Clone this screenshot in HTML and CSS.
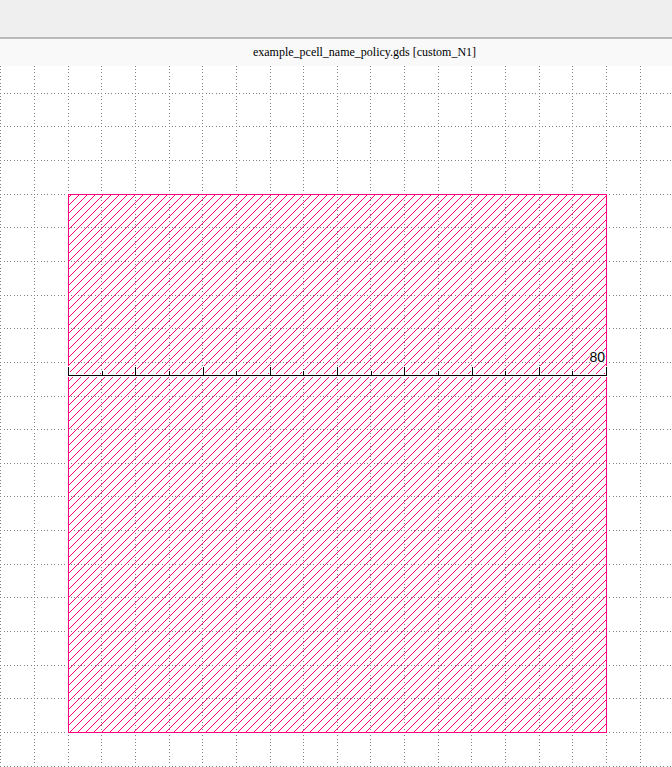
FILE: index.html
```html
<!DOCTYPE html>
<html lang="en">
<head>
<meta charset="utf-8">
<title>example_pcell_name_policy.gds [custom_N1]</title>
<link rel="stylesheet" href="styles.css">
</head>
<body>
<div class="toolbar"></div>
<header class="title">example_pcell_name_policy.gds [custom_N1]</header>
<main class="view">
<svg class="layout" id="layout" role="img" aria-label="Layout view">
  <path id="grid" class="grid"/>
  <path id="hatch" class="hatch"/>
  <path id="outline" class="outline"/>
  <path id="halo" class="halo"/>
  <path id="ruler" class="ruler"/>
  <text class="measure" x="605" y="296" text-anchor="end">80</text>
</svg>
</main>
<script src="layout.js"></script>
</body>
</html>
```
FILE: styles.css
```css
body {
  margin: 0;
  min-height: 100vh;
  display: flex;
  flex-direction: column;
  background: #fff;
}
.toolbar {
  box-sizing: border-box;
  height: 39px;
  background: #efefef;
  border-bottom: 2px solid #b9b9b9;
}
.title {
  height: 27px;
  padding-left: 57px;
  background: #f9f9f9;
  color: #000;
  font: 12px/27px "Liberation Serif", serif;
  text-align: center;
}
.view {
  flex: 1;
  display: flex;
  min-height: 0;
}
.layout {
  flex: 1;
  width: 100%;
  min-width: 0;
  shape-rendering: crispEdges;
}
.hatch {
  fill: none;
  stroke: #ff0080;
  stroke-width: 1;
}
.outline { fill: #ff0080; }
.grid { fill: #808080; }
.ruler { fill: #000; }
.halo {
  fill: #fff;
  stroke: #fff;
  stroke-width: 2;
}
.measure {
  font: 14px "Liberation Sans", sans-serif;
  fill: #000;
  stroke: #fff;
  stroke-width: 2px;
  paint-order: stroke;
}
```
FILE: layout.js
```js
// The box is 538 px wide and spans 16 grid cells, with ten dots to a cell.
const span = 538, cells = 16, left = 68, boxTop = 128, rulerY = 309;
const gridX = 67.6, gridY = 127.6, dot = 3.365;
const right = left + span, bottom = boxTop + span;
const set = (id, d) => document.getElementById(id).setAttribute("d", d);
const pixel = (x, y) => `M${x} ${y}h1v1h-1z`;

function drawGrid() {
  const { width, height } = document.getElementById("layout").getBoundingClientRect();
  let d = "";
  const xAt = i => Math.round(gridX + i * dot);
  const yAt = i => Math.round(gridY + i * dot);
  for (let i = -21; xAt(i) < width; i++) {
    for (let j = -38; yAt(j) < height; j++) {
      if (i % 10 === 0 || j % 10 === 0) d += pixel(xAt(i), yAt(j));
    }
  }
  set("grid", d);
}

// Each diagonal runs where x + y is constant, from the left or bottom edge to the top or right edge.
function drawBox() {
  let d = "";
  for (let sum = left + boxTop + 4; sum < right + bottom; sum += 8) {
    const x1 = Math.max(left, sum - bottom);
    const x2 = Math.min(right, sum - boxTop);
    d += `M${x1} ${sum - x1}L${x2} ${sum - x2}`;
  }
  set("hatch", d);
  const n = span + 1;
  set("outline",
    `M${left} ${boxTop}h${n}v1h-${n}z M${left} ${bottom}h${n}v1h-${n}z` +
    `M${left} ${boxTop}h1v${n}h-1z M${right} ${boxTop}h1v${n}h-1z`);
}

function drawRuler() {
  let d = `M${left} ${rulerY}h${span + 1}v1h-${span + 1}z`;
  for (let i = 0; i <= cells; i++) {
    const x = Math.round(left + i * span / cells);
    const h = i % 2 ? 4 : 8;
    d += `M${x} ${rulerY - h}h1v${h}h-1z`;
  }
  set("ruler", d);
  set("halo", d);
}

drawGrid();
drawBox();
drawRuler();
window.addEventListener("resize", drawGrid);
```
